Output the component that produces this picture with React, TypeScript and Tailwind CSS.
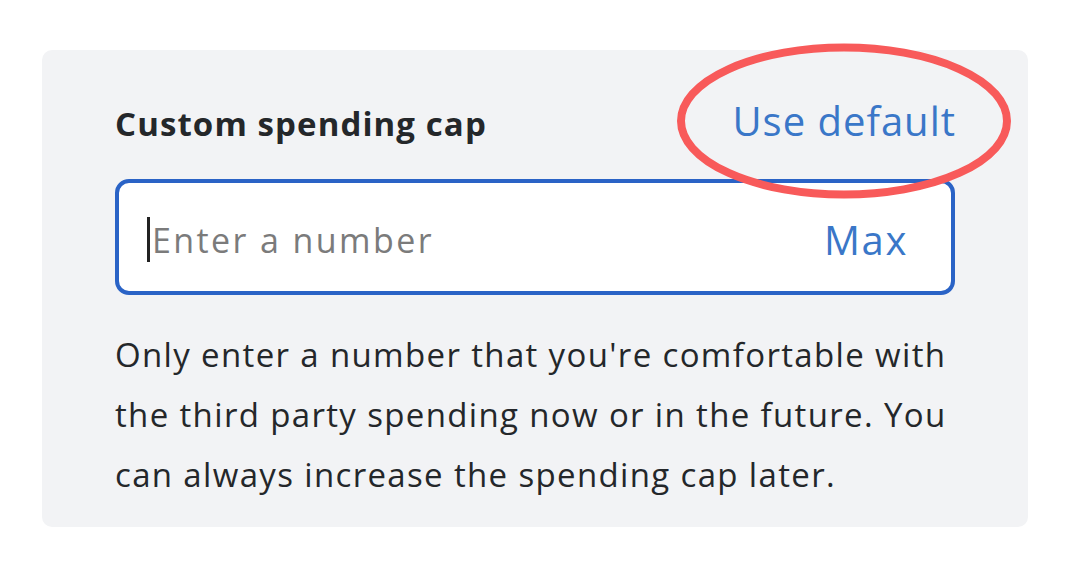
import React from "react";

const FONT = { fontFamily: '"Open Sans", "Liberation Sans", sans-serif' };

// Red hand-drawn style highlight round the "Use default" link.
function Highlight() {
  return (
    <svg
      width="336"
      height="157"
      viewBox="0 0 336 157"
      className="pointer-events-none absolute left-1/2 top-1/2 -translate-x-1/2 -translate-y-1/2"
    >
      <ellipse
        cx="168"
        cy="78.5"
        rx="163"
        ry="73.5"
        fill="none"
        stroke="#f85a5a"
        strokeWidth="8"
      />
    </svg>
  );
}

export default function App() {
  return (
    <div className="h-[564px] w-[1068px] bg-white pt-[50px] pl-[42px]" style={FONT}>
      <div className="h-[477px] w-[986px] rounded-[10px] bg-[#f2f3f5] px-[73px] pt-[47px]">
        <div className="flex h-[48px] items-baseline justify-between">
          <span className="text-[33px] font-bold leading-[40px] tracking-[1.1px] text-[#24272a]">
            Custom spending cap
          </span>
          <span className="relative -mr-[1px] text-[40px] leading-[48px] tracking-[1px] text-[#3a77c8]">
            Use default
            <Highlight />
          </span>
        </div>

        <div className="mt-[34px] flex h-[116px] items-center rounded-[14px] border-4 border-[#2a63c6] bg-white pt-[6px] pl-[28px] pr-[43px]">
          <span className="-mt-[2px] h-[45px] w-[3px] bg-[#222]" />
          <span className="ml-[2px] flex-1 text-[34px] tracking-[2.4px] text-[#7b7b7b]">Enter a number</span>
          <span className="text-[40px] tracking-[1.6px] text-[#3a77c8]">Max</span>
        </div>

        <p className="mt-[30px] text-[33px] leading-[60px] tracking-[1.35px] text-[#24272a]">
          Only enter a number that you're comfortable with
          <br />
          the third party spending now or in the future. You
          <br />
          can always increase the spending cap later.
        </p>
      </div>
    </div>
  );
}
